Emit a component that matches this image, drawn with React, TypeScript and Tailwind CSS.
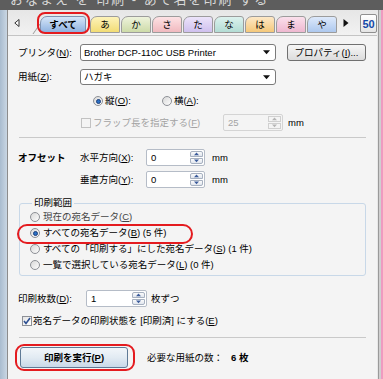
import React from "react";

const Tri = ({ dir = "down", color = "#000", size = 7 }: { dir?: "down" | "up"; color?: string; size?: number }) => (
  <svg width={size} height={Math.ceil(size / 2) + 1} viewBox="0 0 8 5">
    {dir === "down" ? <polygon points="0,0 8,0 4,4.5" fill={color} /> : <polygon points="0,4.5 8,4.5 4,0" fill={color} />}
  </svg>
);

function Spin({ value, w }: { value: string; w: string }) {
  return (
    <div className={`flex h-[17px] border border-[#b5bcc7] bg-white rounded-[2px] ${w}`}>
      <div className="flex-1 pl-[4px] leading-[15px] text-black">{value}</div>
      <div className="flex flex-col w-[13px] my-[1px] mr-[1px] gap-[1px]">
        <div className="flex-1 border border-[#a7b1c0] rounded-t-[2px] bg-gradient-to-b from-[#fbfbfb] to-[#e1e6ee] flex items-center justify-center">
          <Tri dir="up" color="#3b5b9a" size={5} />
        </div>
        <div className="flex-1 border border-[#a7b1c0] rounded-b-[2px] bg-gradient-to-b from-[#fbfbfb] to-[#e1e6ee] flex items-center justify-center">
          <Tri dir="down" color="#3b5b9a" size={5} />
        </div>
      </div>
    </div>
  );
}

function Radio({ checked = false }: { checked?: boolean }) {
  return (
    <span className="w-[10px] h-[10px] shrink-0 rounded-full border border-[#8d9096] bg-gradient-to-br from-[#d8d8d8] to-[#fdfdfd] flex items-center justify-center">
      {checked && <span className="w-[5px] h-[5px] rounded-full bg-[#2a6fc4] border border-[#1c3f7a]" />}
    </span>
  );
}

function Check({ checked = false, disabled = false }: { checked?: boolean; disabled?: boolean }) {
  return (
    <span
      className={`w-[10px] h-[10px] shrink-0 border flex items-center justify-center ${
        disabled ? "border-[#c2c2c2] bg-[#f4f4f4]" : "border-[#8d9096] bg-gradient-to-br from-[#e4e4e4] to-white"
      }`}
    >
      {checked && (
        <svg width="8" height="8" viewBox="0 0 8 8">
          <path d="M1 4 L3 6.5 L7 1" stroke="#2d4f92" strokeWidth="1.6" fill="none" />
        </svg>
      )}
    </span>
  );
}

function Select({ text, h }: { text: string; h: string }) {
  return (
    <div className={`w-[196px] ${h} border border-[#7a7a7a] rounded-[3px] bg-white flex items-center justify-between pl-[3px] pr-[5px]`}>
      <span className="text-black">{text}</span>
      <Tri color="#111" size={7} />
    </div>
  );
}

const tabs: { t: string; c: string }[] = [
  { t: "あ", c: "from-[#fdf3b8] to-[#f2dc74]" },
  { t: "か", c: "from-[#eef3dc] to-[#cddba8]" },
  { t: "さ", c: "from-[#fde2e4] to-[#f0b9bf]" },
  { t: "た", c: "from-[#ece4fa] to-[#cfc0ee]" },
  { t: "な", c: "from-[#dcf2ee] to-[#b3dcd4]" },
  { t: "は", c: "from-[#fde8c6] to-[#f5c879]" },
  { t: "ま", c: "from-[#fbe0ec] to-[#eeb8d0]" },
  { t: "や", c: "from-[#dde9fb] to-[#adc8ee]" },
];

export default function App() {
  return (
    <div className="w-[383px] h-[379px] overflow-hidden bg-[#f4f4f4] text-[9.5px] leading-[12px] text-black font-['Liberation_Sans','Noto_Sans_CJK_JP',sans-serif]">
      {/* title bar */}
      <div className="h-[10px] bg-[#5d5d5d] overflow-hidden flex">
        <div className="mt-[-8px] ml-[10px] text-[13px] leading-[16px] text-[#d9d9d9] whitespace-nowrap tracking-[2px]">
          おなまえ を 印刷 - あて名を印刷 する
        </div>
      </div>
      <div className="flex h-[369px]">
        {/* left frame */}
        <div className="w-[8px] bg-gradient-to-r from-[#a9bccf] to-[#c9d6e3] border-r border-[#8c8c8c]" />
        {/* main */}
        <div className="w-[369px] flex flex-col">
          {/* tab strip */}
          <div className="h-[26px] flex items-end pb-[2px] bg-gradient-to-b from-[#e6e6e6] to-[#f2f2f2] border-b border-[#c4c4c4] pl-[6px]">
            <div className="self-center mt-[2px]">
              <svg width="6" height="8" viewBox="0 0 6 8">
                <polygon points="5,0.5 5,7.5 0.8,4" fill="#fff" stroke="#333" strokeWidth="1" />
              </svg>
            </div>
            <div className="ml-[9px] mb-[-1px] w-[9px] h-[10px] border-r border-[#9a9a9a] skew-x-[-35deg]" />
            <div className="relative ml-[3px]">
              <div className="w-[46px] h-[17px] rounded-tl-[7px] rounded-tr-[3px] border border-[#7f93b0] bg-gradient-to-b from-[#d6e6f8] to-[#8fb2e0] flex items-center justify-center font-bold">
                すべて
              </div>
              <div className="absolute left-[-3px] top-[-4px] w-[53px] h-[22px] border-2 border-[#e41b1f] rounded-[8px]" />
            </div>
            <div className="flex ml-[4px] gap-[1px]">
              {tabs.map((tb) => (
                <div
                  key={tb.t}
                  className={`w-[30px] h-[17px] rounded-tl-[7px] rounded-tr-[3px] border border-[#9c9c9c] bg-gradient-to-b ${tb.c} flex items-center justify-center`}
                >
                  {tb.t}
                </div>
              ))}
            </div>
            <div className="self-center ml-[6px] mt-[2px]">
              <svg width="6" height="8" viewBox="0 0 6 8">
                <polygon points="0.5,0 0.5,8 5.5,4" fill="#111" />
              </svg>
            </div>
            <div className="ml-[11px] mb-[0px] w-[19px] h-[19px] border border-[#8f8f8f] rounded-[2px] bg-gradient-to-b from-white to-[#e4e4e4] flex items-center justify-center text-[11px] font-bold text-[#1448a8]">
              50
            </div>
          </div>

          {/* form */}
          <div className="flex flex-col pl-[10px] pr-[11px]">
            {/* printer */}
            <div className="flex items-center h-[17px] mt-[8px]">
              <div className="w-[62px]">
                プリンタ(<u>N</u>):
              </div>
              <Select text="Brother DCP-110C USB Printer" h="h-[17px]" />
              <div className="ml-[11px] w-[79px] h-[17px] border border-[#707070] rounded-[3px] bg-gradient-to-b from-[#f6f6f6] to-[#dcdcdc] flex items-center justify-center">
                プロパティ(<u>I</u>)...
              </div>
            </div>
            {/* paper */}
            <div className="flex items-center h-[16px] mt-[8px]">
              <div className="w-[62px]">
                用紙(<u>Z</u>):
              </div>
              <Select text="ハガキ" h="h-[16px]" />
            </div>
            {/* orientation */}
            <div className="flex items-center h-[14px] mt-[9px] ml-[75px]">
              <Radio checked />
              <span className="ml-[2px]">
                縦(<u>O</u>):
              </span>
              <span className="ml-[31px]">
                <Radio />
              </span>
              <span className="ml-[2px]">
                横(<u>A</u>):
              </span>
            </div>
            {/* flap */}
            <div className="flex items-center h-[17px] mt-[6px] ml-[63px]">
              <Check disabled />
              <span className="ml-[2px] w-[130px] text-[#a3a3a3]">
                フラップ長を指定する(<u>F</u>)
              </span>
              <div className="flex h-[17px] w-[60px] border border-[#d4d4d4] bg-[#f4f4f4] rounded-[2px]">
                <div className="flex-1 pl-[4px] leading-[15px] text-[#a3a3a3]">25</div>
                <div className="flex flex-col w-[13px] my-[1px] mr-[1px] gap-[1px]">
                  <div className="flex-1 border border-[#d0d0d0] bg-[#f4f4f4] flex items-center justify-center">
                    <Tri dir="up" color="#b5b5b5" size={5} />
                  </div>
                  <div className="flex-1 border border-[#d0d0d0] bg-[#f4f4f4] flex items-center justify-center">
                    <Tri dir="down" color="#b5b5b5" size={5} />
                  </div>
                </div>
              </div>
              <span className="ml-[5px]">mm</span>
            </div>
            {/* separator */}
            <div className="h-px bg-[#c9c9c9] mt-[6px] ml-[1px]" />
            {/* offset */}
            <div className="flex items-center h-[17px] mt-[11px]">
              <div className="w-[62px] font-bold">オフセット</div>
              <div className="w-[66px]">
                水平方向(<u>X</u>):
              </div>
              <Spin value="0" w="w-[59px]" />
              <span className="ml-[7px]">mm</span>
            </div>
            <div className="flex items-center h-[17px] mt-[5px]">
              <div className="w-[66px] ml-[62px]">
                垂直方向(<u>Y</u>):
              </div>
              <Spin value="0" w="w-[59px]" />
              <span className="ml-[7px]">mm</span>
            </div>
            {/* print range */}
            <fieldset className="mt-[9px] ml-[1px] border border-[#c8d8e8] rounded-[3px] pl-[10px] pb-[2px]">
              <legend className="ml-[2px] px-[2px] leading-[12px]">印刷範囲</legend>
              <div className="flex items-center h-[16px] text-[#444]">
                <Radio />
                <span className="ml-[3px]">
                  現在の宛名データ(<u>C</u>)
                </span>
              </div>
              <div className="relative flex items-center h-[16px]">
                <Radio checked />
                <span className="ml-[3px]">
                  すべての宛名データ(<u>B</u>) (5 件)
                </span>
                <div className="absolute left-[-13px] top-[-1px] w-[176px] h-[20px] border-2 border-[#e41b1f] rounded-full" />
              </div>
              <div className="flex items-center h-[16px]">
                <Radio />
                <span className="ml-[3px]">
                  すべての「印刷する」にした宛名データ(<u>S</u>) (1 件)
                </span>
              </div>
              <div className="flex items-center h-[16px]">
                <Radio />
                <span className="ml-[3px]">
                  一覧で選択している宛名データ(<u>L</u>) (0 件)
                </span>
              </div>
            </fieldset>
            {/* copies */}
            <div className="flex items-center h-[17px] mt-[14px]">
              <div className="w-[68px]">
                印刷枚数(<u>D</u>):
              </div>
              <Spin value="1" w="w-[61px]" />
              <span className="ml-[4px]">枚ずつ</span>
            </div>
            <div className="flex items-center h-[12px] mt-[8px] ml-[4px]">
              <Check checked />
              <span className="ml-[1px]">
                宛名データの印刷状態を [印刷済] にする(<u>E</u>)
              </span>
            </div>
            <div className="h-px bg-[#c9c9c9] mt-[10px] ml-[1px]" />
            {/* action */}
            <div className="flex items-center h-[21px] mt-[9px]">
              <div className="relative ml-[2px]">
                <div className="w-[108px] h-[21px] border border-[#5f7a96] rounded-[3px] bg-gradient-to-b from-[#f2f6fa] via-[#e2ebf3] to-[#c9d9e8] flex items-center justify-center font-bold">
                  印刷を実行(<u>P</u>)
                </div>
                <div className="absolute left-[-5px] top-[-3px] w-[120px] h-[27px] border-2 border-[#e41b1f] rounded-[9px]" />
              </div>
              <span className="ml-[19px]">必要な用紙の数：</span>
              <span className="ml-[8px] font-bold">6 枚</span>
            </div>
          </div>
        </div>
        {/* right frame */}
        <div className="w-[6px] flex">
          <div className="w-[1px] bg-[#e8e8e8]" />
          <div className="w-[1px] bg-[#9a9a9a]" />
          <div className="w-[2px] bg-[#cfcfcf]" />
          <div className="w-[2px] bg-[#f09ac0]" />
        </div>
      </div>
    </div>
  );
}
